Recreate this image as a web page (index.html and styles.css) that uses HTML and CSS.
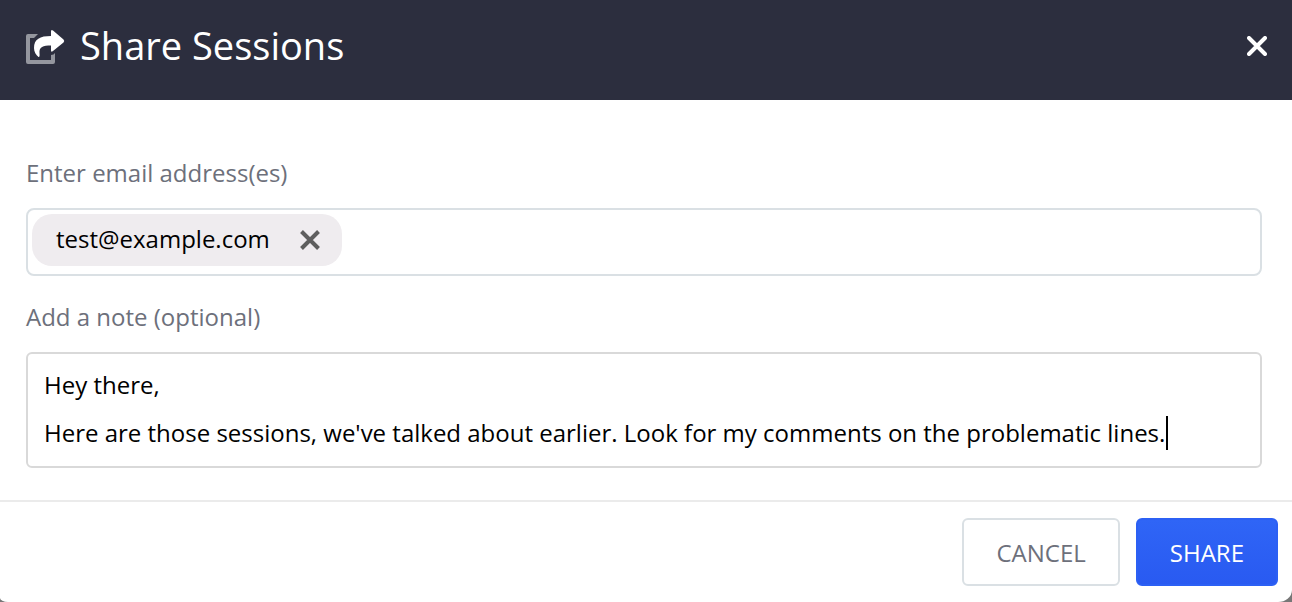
FILE: index.html
```html
<!DOCTYPE html>
<html lang="en">
<head>
<meta charset="utf-8">
<meta name="viewport" content="width=device-width, initial-scale=1">
<title>Share Sessions</title>
<link rel="stylesheet" href="styles.css">
</head>
<body>
<form class="dialog" role="dialog" aria-labelledby="dialog-title">
  <header class="dialog-header">
    <svg class="share-icon" viewBox="0 -4 39 39" aria-hidden="true">
      <path class="share-frame" d="M12 4 L8 8 H4 V30 H25 V25 Q28 25 29 23 V32 Q29 34 27 34 H2 Q0 34 0 32 V6 Q0 4 2 4 Z"/>
      <path class="share-arrow" d="M25 1.500 Q25 -1 27 0.500 L37.500 9.500 Q39 11 37.500 12.500 L27 21 Q25 22.500 25 20.500 V15.500 C17 15.500 13 17 13.500 23 Q14 27.500 12.500 27 C10 25 8 22 8 18 C8 9 14 6 25 6 Z"/>
    </svg>
    <h1 class="dialog-title" id="dialog-title">Share Sessions</h1>
    <button class="close-button" type="button" aria-label="Close">
      <svg class="close-icon" viewBox="0 0 20 20" aria-hidden="true"><path d="M2 2 L18 18 M18 2 L2 18"/></svg>
    </button>
  </header>
  <div class="dialog-body">
    <div class="field">
      <label class="field-label" for="email">Enter email address(es)</label>
      <div class="email-box">
        <span class="chip">test@example.com
          <button class="chip-remove" type="button" aria-label="Remove test@example.com">
            <svg class="chip-icon" viewBox="0 0 20 20" aria-hidden="true"><path d="M1.500 1.500 L18.500 18.500 M18.500 1.500 L1.500 18.500"/></svg>
          </button>
        </span>
        <input class="email-input" id="email" type="email">
      </div>
    </div>
    <div class="field">
      <label class="field-label" for="note">Add a note (optional)</label>
      <div class="note-wrap">
        <textarea class="note" id="note" rows="2">Hey there,
Here are those sessions, we've talked about earlier. Look for my comments on the problematic lines.</textarea>
        <span class="caret"></span>
      </div>
    </div>
  </div>
  <footer class="dialog-footer">
    <button class="button button-cancel" type="button">CANCEL</button>
    <button class="button button-share" type="submit">SHARE</button>
  </footer>
</form>
</body>
</html>
```
FILE: styles.css
```css
* {
  box-sizing: border-box;
}

body {
  margin: 0;
  background: #777777;
  color: #000000;
  font-family: "Open Sans", "Noto Sans", sans-serif;
  font-size: 24px;
}

button,
input,
textarea {
  font: inherit;
}

.dialog {
  display: flex;
  flex-direction: column;
  min-height: 100vh;
  background: #ffffff;
  border-radius: 0 0 14px 8px / 0 0 12px 4px;
  overflow: hidden;
}

.dialog-header {
  display: flex;
  align-items: center;
  gap: 15px;
  padding: 17px 24px 27px 26px;
  background: #2c2e3e;
  color: #ffffff;
}

.share-icon {
  width: 39px;
  height: 39px;
}

.share-frame {
  fill: #94969e;
}

.share-arrow {
  fill: #ffffff;
}

.dialog-title {
  flex: 1;
  margin: 0;
  font-size: 38px;
  font-weight: 400;
  line-height: 56px;
}

.close-button,
.chip-remove {
  display: flex;
  padding: 0;
  border: 0;
  background: none;
}

.close-icon,
.chip-icon {
  width: 20px;
  height: 20px;
  fill: none;
  stroke: #ffffff;
  stroke-width: 4;
  stroke-linecap: round;
}

.close-button {
  padding: 2px 1px 0 0;
}

.chip-icon {
  stroke: #5e5e5e;
  stroke-linecap: butt;
}

.dialog-body {
  display: flex;
  flex: 1;
  flex-direction: column;
  gap: 24px;
  padding: 56px 30px 32px 26px;
}

.field {
  display: flex;
  flex-direction: column;
  gap: 18px;
}

.field-label {
  color: #6d707b;
  line-height: 34px;
}

.email-box {
  display: flex;
  align-items: flex-start;
  min-height: 68px;
  padding: 4px;
  border: 2px solid #dae0e4;
  border-radius: 8px;
}

.chip {
  display: flex;
  align-items: center;
  gap: 30px;
  padding: 7px 22px 9px 24px;
  border-radius: 20px;
  background: #efecef;
  line-height: 36px;
}

.chip-remove {
  padding-top: 2px;
}

.email-input {
  flex: 1;
  min-width: 0;
  height: 52px;
  border: 0;
  outline: 0;
  background: none;
}

.note-wrap {
  position: relative;
}

.note {
  display: block;
  width: 100%;
  padding: 7px 16px 9px;
  border: 2px solid #d9d9d9;
  border-radius: 6px;
  outline: 0;
  color: inherit;
  line-height: 48px;
  resize: none;
  overflow: hidden;
}

.caret {
  position: absolute;
  left: 1140px;
  top: 64px;
  width: 2px;
  height: 34px;
  background: #000000;
}

.dialog-footer {
  display: flex;
  justify-content: flex-end;
  gap: 16px;
  padding: 16px 14px 16px 26px;
  border-top: 2px solid #ebebeb;
}

.button {
  padding: 15px 32px 13px;
  border: 2px solid #dae0e4;
  border-radius: 6px;
  background: #ffffff;
  color: #6d707b;
  line-height: 36px;
}

.button-share {
  border-color: #2c60f4;
  background: linear-gradient(#2f65f6, #295af1);
  color: #ffffff;
}
```
